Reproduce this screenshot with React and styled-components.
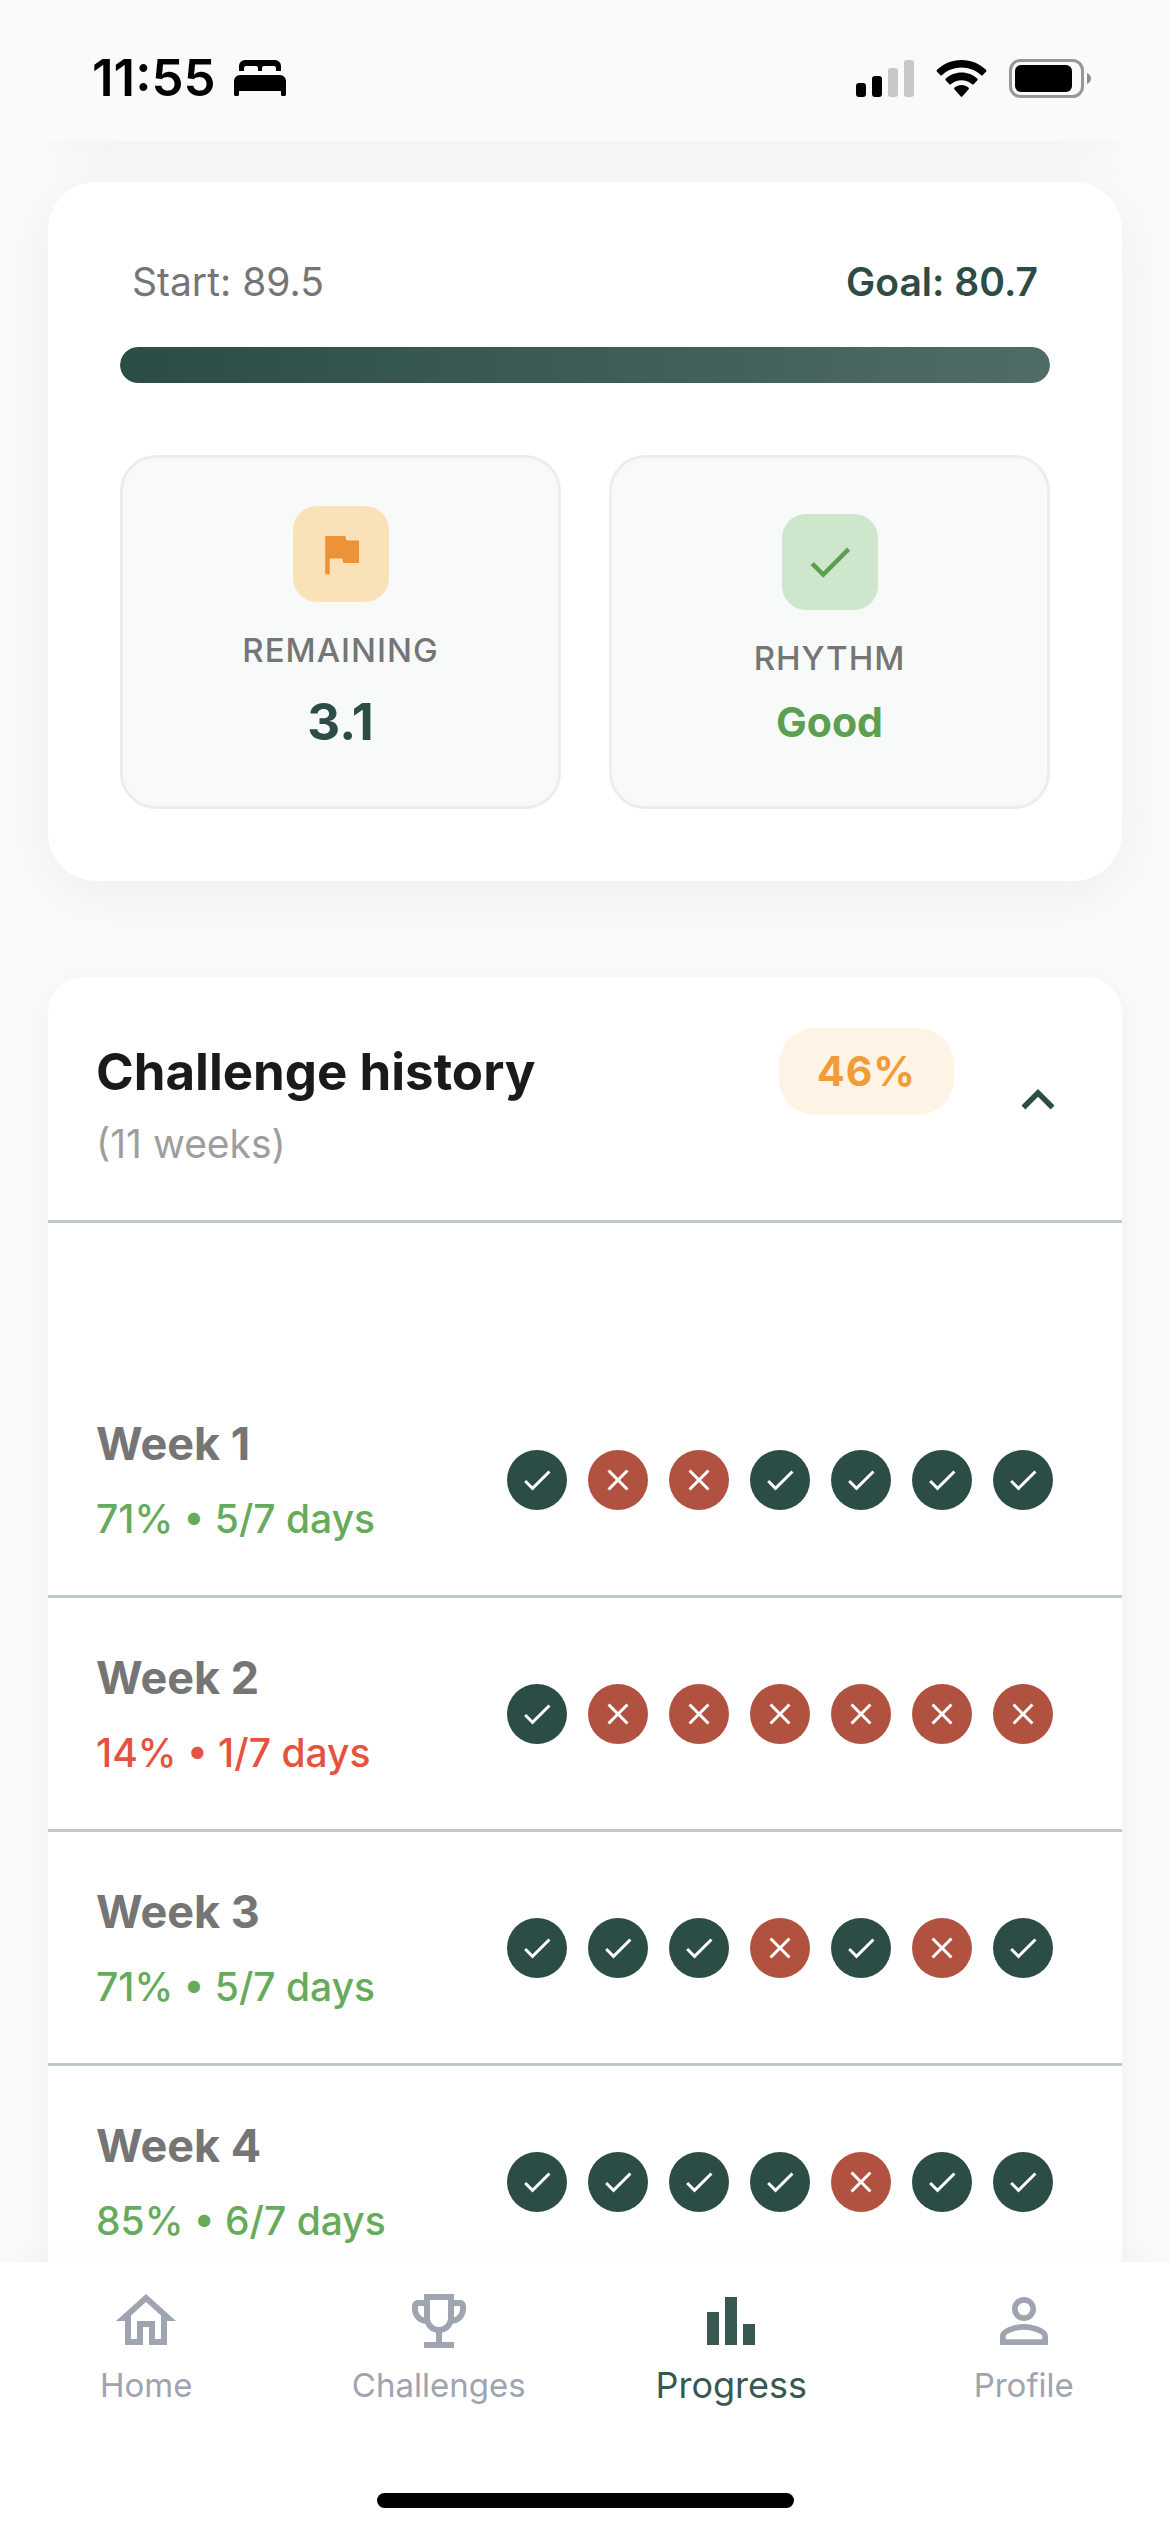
import React, { useState } from 'react'
import styled, { createGlobalStyle } from 'styled-components'
import {
  MdFlag,
  MdCheck,
  MdClose,
  MdExpandLess,
  MdExpandMore,
  MdOutlineHome,
  MdOutlineEmojiEvents,
  MdBarChart,
  MdPersonOutline,
} from 'react-icons/md'

const GlobalStyle = createGlobalStyle`
  * {
    box-sizing: border-box;
  }
  body {
    margin: 0;
    background: #fafafa;
    font-family: Inter, "Liberation Sans", sans-serif;
  }
  h2, h3, p, ul {
    margin: 0;
    padding: 0;
  }
  svg {
    display: block;
  }
`

const Screen = styled.div`
  height: 100vh;
  display: flex;
  flex-direction: column;
  overflow: hidden;
`

// --------- status bar -----------
const StatusBar = styled.header`
  height: 141px;
  flex-shrink: 0;
  display: flex;
  justify-content: space-between;
  align-items: center;
  padding: 15px 78px 0 92px;
`
const StatusGroup = styled.div`
  display: flex;
  align-items: center;
  gap: ${({ $gap }) => $gap}px;
`
const Time = styled.span`
  font-size: 51px;
  line-height: 60px;
  font-weight: 600;
  color: #000;
`

// --------- scroll area -----------
const Content = styled.main`
  flex: 1;
  min-height: 0;
  overflow: hidden;
  padding: 0 48px;
`
// bottom edge of the card that is scrolled out of view
const ScrolledCard = styled.div`
  height: 48px;
  margin-top: -55px;
  margin-bottom: 48px;
  border-radius: 0 0 48px 48px;
  background: #fff;
  box-shadow: 0 12px 60px rgba(0, 0, 0, 0.05);
`
const GoalCard = styled.section`
  background: #fff;
  border-radius: 48px;
  padding: 72px;
  box-shadow: 0 12px 60px rgba(0, 0, 0, 0.05);
`
const GoalLabels = styled.div`
  display: flex;
  justify-content: space-between;
  padding: 0 12px;
  margin-bottom: 38px;
`
const GoalLabel = styled.span`
  font-size: 39px;
  line-height: 55px;
  font-weight: ${({ $strong }) => ($strong ? 600 : 400)};
  color: ${({ $strong }) => ($strong ? '#2c4c45' : '#757575')};
`
const ProgressTrack = styled.div`
  height: 36px;
  border-radius: 18px;
  background: #ededed;
  overflow: hidden;
`
const ProgressFill = styled.div`
  height: 100%;
  border-radius: 18px;
  background: linear-gradient(90deg, #2b4d46, #506c66);
`

const Stats = styled.div`
  display: grid;
  grid-template-columns: 1fr 1fr;
  gap: 48px;
  margin-top: 72px;
`
const Stat = styled.div`
  display: flex;
  flex-direction: column;
  align-items: center;
  justify-content: center;
  padding: 48px;
  border: 3px solid #ededed;
  border-radius: 36px;
  background: #f8faf9;
`
const StatIcon = styled.div`
  width: 96px;
  height: 96px;
  display: flex;
  align-items: center;
  justify-content: center;
  border-radius: 24px;
  margin-bottom: 24px;
  font-size: 54px;
  color: ${({ $color }) => $color};
  background: ${({ $bg }) => $bg};
`
const StatName = styled.span`
  font-size: 33px;
  line-height: 48px;
  font-weight: 500;
  letter-spacing: 1px;
  text-transform: uppercase;
  color: #757575;
  margin-bottom: 12px;
`
const StatValue = styled.span`
  font-size: ${({ $large }) => ($large ? 51 : 41)}px;
  line-height: ${({ $large }) => ($large ? 72 : 57)}px;
  font-weight: 700;
  color: ${({ $large }) => ($large ? '#2c4c45' : '#5c9f51')};
`

// --------- challenge history -----------
const HistoryCard = styled.section`
  margin-top: 96px;
  background: #fff;
  border-radius: 36px;
  box-shadow: 0 6px 36px rgba(0, 0, 0, 0.04);
`
const HistoryHeader = styled.div`
  display: flex;
  align-items: flex-start;
  padding: 51px 48px 48px;
  border-bottom: 3px solid #bfc9c6;
`
const HistoryText = styled.div`
  flex: 1;
`
const HistoryTitle = styled.h2`
  font-size: 51px;
  line-height: 87px;
  font-weight: 700;
  color: #1a1a1a;
`
const HistoryCount = styled.p`
  font-size: 39px;
  line-height: 57px;
  color: #9e9e9e;
`
const Badge = styled.span`
  padding: 0 38px;
  border-radius: 36px;
  font-size: 41px;
  line-height: 87px;
  font-weight: 700;
  letter-spacing: 1px;
  color: #f29c38;
  background: #fef4e6;
`
const Toggle = styled.button`
  align-self: center;
  width: 72px;
  height: 72px;
  display: flex;
  align-items: center;
  justify-content: center;
  margin-left: 48px;
  padding: 0;
  border: none;
  background: none;
  font-size: 66px;
  color: #2c4c45;
  cursor: pointer;
`
const WeekList = styled.ul`
  list-style: none;
  padding-top: 141px;
`
const WeekRow = styled.li`
  display: flex;
  justify-content: space-between;
  align-items: center;
  padding: 48px;
  border-bottom: 3px solid #bfc9c6;
`
const WeekName = styled.h3`
  font-size: 45px;
  line-height: 63px;
  font-weight: 700;
  color: #757575;
  margin-bottom: 15px;
`
const WeekResult = styled.p`
  font-size: 39px;
  line-height: 57px;
  font-weight: 500;
  color: ${({ $good }) => ($good ? '#66ab5c' : '#e3533f')};
`
const Days = styled.div`
  display: flex;
  gap: 21px;
  padding-right: 21px;
`
const Day = styled.span`
  width: 60px;
  height: 60px;
  display: flex;
  align-items: center;
  justify-content: center;
  border-radius: 50%;
  font-size: 36px;
  color: #fff;
  background: ${({ $done }) => ($done ? '#2c4c46' : '#b15241')};
`

// --------- tab bar -----------
const BottomBar = styled.footer`
  position: relative;
  flex-shrink: 0;
  padding: 23px 0 24px;
  background: #fff;
  box-shadow: 0 -6px 24px rgba(0, 0, 0, 0.02);
`
const Tabs = styled.nav`
  display: grid;
  grid-template-columns: repeat(4, 1fr);
`
const Tab = styled.a`
  display: flex;
  flex-direction: column;
  align-items: center;
  gap: 4px;
  font-size: ${({ $active }) => ($active ? 36 : 33)}px;
  line-height: 48px;
  text-decoration: none;
  color: ${({ $active }) => ($active ? '#395852' : '#9fa4b1')};

  svg {
    width: 72px;
    height: 72px;
  }
`
const HomeIndicator = styled.div`
  width: 417px;
  height: 15px;
  margin: 84px auto 0;
  border-radius: 8px;
  background: #000;
`

const weeks = [
  { name: 'Week 1', percent: 71, days: [1, 0, 0, 1, 1, 1, 1] },
  { name: 'Week 2', percent: 14, days: [1, 0, 0, 0, 0, 0, 0] },
  { name: 'Week 3', percent: 71, days: [1, 1, 1, 0, 1, 0, 1] },
  { name: 'Week 4', percent: 85, days: [1, 1, 1, 1, 0, 1, 1] },
]

const tabs = [
  { name: 'Home', icon: MdOutlineHome },
  { name: 'Challenges', icon: MdOutlineEmojiEvents },
  { name: 'Progress', icon: MdBarChart, active: true },
  { name: 'Profile', icon: MdPersonOutline },
]

const BedIcon = () => (
  <svg width="52" height="36" viewBox="0 0 52 36">
    <path d="M5 11V6a6 6 0 0 1 6-6h30a6 6 0 0 1 6 6v5h-5V8a2 2 0 0 0-2-2H30a2 2 0 0 0-2 2v3h-4V8a2 2 0 0 0-2-2H12a2 2 0 0 0-2 2v3z" />
    <path d="M6 15h40a6 6 0 0 1 6 6v13a2 2 0 0 1-5 0v-3H5v3a2 2 0 0 1-5 0V21a6 6 0 0 1 6-6z" />
  </svg>
)

const SignalIcon = () => (
  <svg width="58" height="37" viewBox="0 0 58 37">
    <rect x="0" y="23" width="10" height="14" rx="3" />
    <rect x="16" y="16" width="10" height="21" rx="3" />
    <rect x="32" y="8" width="10" height="29" rx="3" fill="#c8c8c8" />
    <rect x="48" y="0" width="10" height="37" rx="3" fill="#c8c8c8" />
  </svg>
)

const WifiIcon = () => (
  <svg width="51" height="37" viewBox="0 0 51 37">
    <path d="M25.5 0C35 0 43.600 3.700 50 9.800q1 1 0 2l-3.200 3.200q-1 1-2 0C39.700 10.300 33 7.500 25.500 7.500S11.300 10.300 6.200 15q-1 1-2 0L1 11.800q-1-1 0-2C7.400 3.700 16 0 25.500 0z" />
    <path d="M25.500 12.500c6.100 0 11.600 2.300 15.700 6.100q1 1 0 2L37.900 24q-1 1-2 0c-2.800-2.400-6.400-3.800-10.400-3.800S17.900 21.600 15.100 24q-1 1-2 0l-3.300-3.400q-1-1 0-2c4.100-3.800 9.600-6.100 15.700-6.100z" />
    <path d="M25.500 25c2.600 0 5 .9 6.900 2.500q1 1 0 2l-5.900 6.800q-1 1-2 0l-5.900-6.800q-1-1 0-2C20.500 25.900 22.900 25 25.500 25z" />
  </svg>
)

const BatteryIcon = () => (
  <svg width="83" height="39" viewBox="0 0 83 39">
    <rect x="1.500" y="1.500" width="72" height="36" rx="10" fill="none" stroke="#979797" strokeWidth="3" />
    <rect x="6" y="6" width="57" height="27" rx="6" />
    <path d="M78 14c2.500 1 4 3 4 5.500S80.500 24 78 25z" fill="#8f8f8f" />
  </svg>
)

const App = () => {
  const [open, setOpen] = useState(true)

  return (
    <Screen>
      <GlobalStyle />
      <StatusBar>
        <StatusGroup $gap={18}>
          <Time>11:55</Time>
          <BedIcon />
        </StatusGroup>
        <StatusGroup $gap={22}>
          <SignalIcon />
          <WifiIcon />
          <BatteryIcon />
        </StatusGroup>
      </StatusBar>

      <Content>
        <ScrolledCard />
        <GoalCard>
          <GoalLabels>
            <GoalLabel>Start: 89.5</GoalLabel>
            <GoalLabel $strong>Goal: 80.7</GoalLabel>
          </GoalLabels>
          <ProgressTrack>
            <ProgressFill />
          </ProgressTrack>
          <Stats>
            <Stat>
              <StatIcon $color="#ed9337" $bg="#f9e1b8">
                <MdFlag />
              </StatIcon>
              <StatName>Remaining</StatName>
              <StatValue $large>3.1</StatValue>
            </Stat>
            <Stat>
              <StatIcon $color="#5c9f51" $bg="#cee6cc">
                <MdCheck />
              </StatIcon>
              <StatName>Rhythm</StatName>
              <StatValue>Good</StatValue>
            </Stat>
          </Stats>
        </GoalCard>

        <HistoryCard>
          <HistoryHeader>
            <HistoryText>
              <HistoryTitle>Challenge history</HistoryTitle>
              <HistoryCount>(11 weeks)</HistoryCount>
            </HistoryText>
            <Badge>46%</Badge>
            <Toggle
              type="button"
              aria-label="Challenge history"
              aria-expanded={open}
              onClick={() => setOpen(!open)}
            >
              {open ? <MdExpandLess /> : <MdExpandMore />}
            </Toggle>
          </HistoryHeader>
          {open && (
            <WeekList>
              {weeks.map(({ name, percent, days }) => (
                <WeekRow key={name}>
                  <div>
                    <WeekName>{name}</WeekName>
                    <WeekResult $good={percent > 50}>
                      {`${percent}% • ${days.filter(Boolean).length}/7 days`}
                    </WeekResult>
                  </div>
                  <Days>
                    {days.map((done, i) => (
                      <Day key={i} $done={done}>
                        {done ? <MdCheck /> : <MdClose />}
                      </Day>
                    ))}
                  </Days>
                </WeekRow>
              ))}
            </WeekList>
          )}
        </HistoryCard>
      </Content>

      <BottomBar>
        <Tabs>
          {tabs.map(({ name, icon: Icon, active }) => (
            <Tab key={name} href={`#${name.toLowerCase()}`} $active={active}>
              <Icon />
              {name}
            </Tab>
          ))}
        </Tabs>
        <HomeIndicator />
      </BottomBar>
    </Screen>
  )
}

export default App
